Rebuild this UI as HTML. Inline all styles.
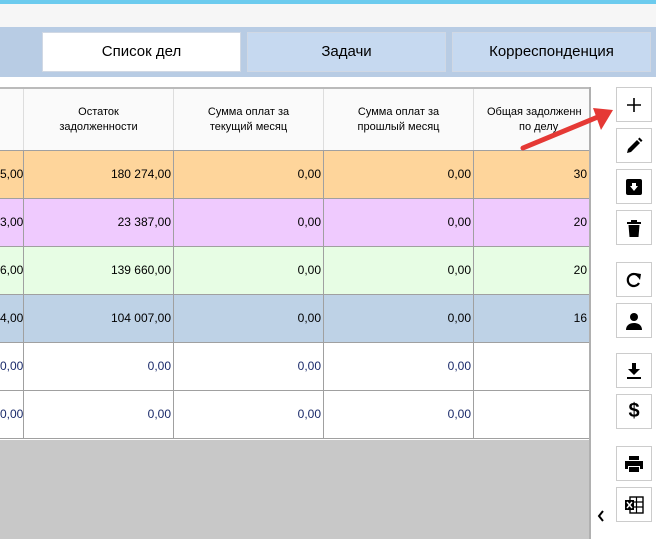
<!DOCTYPE html>
<html><head><meta charset="utf-8"><style>
*{margin:0;padding:0;box-sizing:border-box}
body{width:656px;height:539px;overflow:hidden;background:#fff;position:relative;font-family:"Segoe UI","Liberation Sans","DejaVu Sans",sans-serif;font-size:12px;color:#000}
.a{position:absolute}
.tab{position:absolute;top:32px;height:40px;border:1px solid #d0d8e4;background:#c6d9f0;text-align:center;line-height:38px;font-size:15px}
.hd{position:absolute;top:89px;height:62px;border-right:1px solid #ddd;background:#fafafa;text-align:center;font-size:11px;line-height:15px;padding-top:16px}
.row{position:absolute;left:0;width:590px;height:48px;border-bottom:1px solid #a0a0a0}
.c{position:absolute;top:0;height:47px;border-right:1px solid #a0a0a0;text-align:right;line-height:46px;padding-right:2px;font-size:12px}
.btn{position:absolute;left:616px;width:36px;height:35px;border:1px solid #ccc;background:#fff;display:flex;align-items:center;justify-content:center}
</style></head><body>
<div class="a" style="left:0;top:0;width:656px;height:4px;background:#6ccbee"></div>
<div class="a" style="left:0;top:4px;width:656px;height:23px;background:#f6f6f6"></div>
<div class="a" style="left:0;top:27px;width:656px;height:50px;background:#b8cce4"></div>
<div class="tab" style="left:42px;width:199px;background:#fff">Список дел</div>
<div class="tab" style="left:247px;width:199px">Задачи</div>
<div class="tab" style="left:452px;width:199px">Корреспонденция</div>

<div class="a" style="left:0;top:87px;width:591px;height:2px;background:#bbb"></div>
<div class="hd" style="left:0;width:24px"></div>
<div class="hd" style="left:24px;width:150px">Остаток<br>задолженности</div>
<div class="hd" style="left:174px;width:150px">Сумма оплат за<br>текущий месяц</div>
<div class="hd" style="left:324px;width:150px">Сумма оплат за<br>прошлый месяц</div>
<div class="hd" style="left:474px;width:116px;overflow:hidden;white-space:nowrap;text-align:left;padding-left:13px">Общая задолженн<br><span style="padding-left:32px">по делу</span></div>
<div class="a" style="left:0;top:150px;width:590px;height:1px;background:#a0a0a0"></div>

<div class="row" style="top:151px;background:#fed59b"><div class="c" style="left:0;width:24px">5,00</div><div class="c" style="left:24px;width:150px">180 274,00</div><div class="c" style="left:174px;width:150px">0,00</div><div class="c" style="left:324px;width:150px">0,00</div><div class="c" style="left:474px;width:116px">30</div></div>
<div class="row" style="top:199px;background:#efcafe"><div class="c" style="left:0;width:24px">3,00</div><div class="c" style="left:24px;width:150px">23 387,00</div><div class="c" style="left:174px;width:150px">0,00</div><div class="c" style="left:324px;width:150px">0,00</div><div class="c" style="left:474px;width:116px">20</div></div>
<div class="row" style="top:247px;background:#e7fde4"><div class="c" style="left:0;width:24px">6,00</div><div class="c" style="left:24px;width:150px">139 660,00</div><div class="c" style="left:174px;width:150px">0,00</div><div class="c" style="left:324px;width:150px">0,00</div><div class="c" style="left:474px;width:116px">20</div></div>
<div class="row" style="top:295px;background:#bed2e6"><div class="c" style="left:0;width:24px">4,00</div><div class="c" style="left:24px;width:150px">104 007,00</div><div class="c" style="left:174px;width:150px">0,00</div><div class="c" style="left:324px;width:150px">0,00</div><div class="c" style="left:474px;width:116px">16</div></div>
<div class="row" style="top:343px;background:#fff;color:#1a2a6a"><div class="c" style="left:0;width:24px">0,00</div><div class="c" style="left:24px;width:150px">0,00</div><div class="c" style="left:174px;width:150px">0,00</div><div class="c" style="left:324px;width:150px">0,00</div><div class="c" style="left:474px;width:116px"></div></div>
<div class="row" style="top:391px;background:#fff;color:#1a2a6a"><div class="c" style="left:0;width:24px">0,00</div><div class="c" style="left:24px;width:150px">0,00</div><div class="c" style="left:174px;width:150px">0,00</div><div class="c" style="left:324px;width:150px">0,00</div><div class="c" style="left:474px;width:116px"></div></div>
<div class="a" style="left:0;top:440px;width:590px;height:99px;background:#c8c8c8"></div>
<div class="a" style="left:589px;top:87px;width:2px;height:452px;background:#b0b0b0"></div>

<div class="btn" style="top:87px"><svg width="16" height="16"><path d="M8 1v14M1 8h14" stroke="#000" stroke-width="1.6"/></svg></div>
<div class="btn" style="top:128px"><svg width="18" height="18"><path d="M2 16l1-4 9-9 3 3-9 9z M13 2l1.5-1.5 3 3L16 5z" fill="#000"/></svg></div>
<div class="btn" style="top:169px"><svg width="18" height="18"><rect x="1" y="1" width="16" height="16" rx="2" fill="#000"/><path d="M5 8h8l-4 5z M7 5h4v4H7z" fill="#fff"/></svg></div>
<div class="btn" style="top:210px"><svg width="16" height="18"><path d="M1 3h14v2H1z M5 1h6v2H5z M2.5 6h11l-1 12h-9z" fill="#000"/></svg></div>
<div class="btn" style="top:262px"><svg width="18" height="18"><path d="M14 6A6 6 0 1 0 14 12" fill="none" stroke="#000" stroke-width="2.2"/><path d="M10 2l6 1-1 6z" fill="#000"/></svg></div>
<div class="btn" style="top:303px"><svg width="18" height="18"><circle cx="9" cy="5" r="4" fill="#000"/><path d="M1 18c0-5 4-7 8-7s8 2 8 7z" fill="#000"/></svg></div>
<div class="btn" style="top:353px"><svg width="16" height="18"><path d="M6 1h4v6h4l-6 6-6-6h4z M1 15h14v2H1z" fill="#000"/></svg></div>
<div class="btn" style="top:394px;font-size:20px;font-weight:bold">$</div>
<div class="btn" style="top:446px"><svg width="20" height="18"><path d="M5 1h10v4H5z M1 6h18v8h-3v-3H4v3H1z M5 12h10v5H5z" fill="#000"/></svg></div>
<div class="btn" style="top:487px"><svg width="20" height="18"><rect x="6" y="1" width="13" height="16" fill="#fff" stroke="#000" stroke-width="1.4"/><path d="M6 6h13M6 11h13M12.5 1v16" stroke="#000" stroke-width="1.2"/><rect x="1" y="4" width="9" height="10" fill="#000"/><path d="M3 6l5 6M8 6l-5 6" stroke="#fff" stroke-width="1.4"/></svg></div>
<svg class="a" style="left:596px;top:509px" width="10" height="14"><path d="M7 2L3 7l4 5" fill="none" stroke="#000" stroke-width="2"/></svg>

<svg class="a" style="left:515px;top:100px" width="100" height="55"><path d="M8 48L90 14" stroke="#e53935" stroke-width="5" stroke-linecap="round"/><path d="M98 10L78 8l8 22z" fill="#e53935"/></svg>
</body></html>
